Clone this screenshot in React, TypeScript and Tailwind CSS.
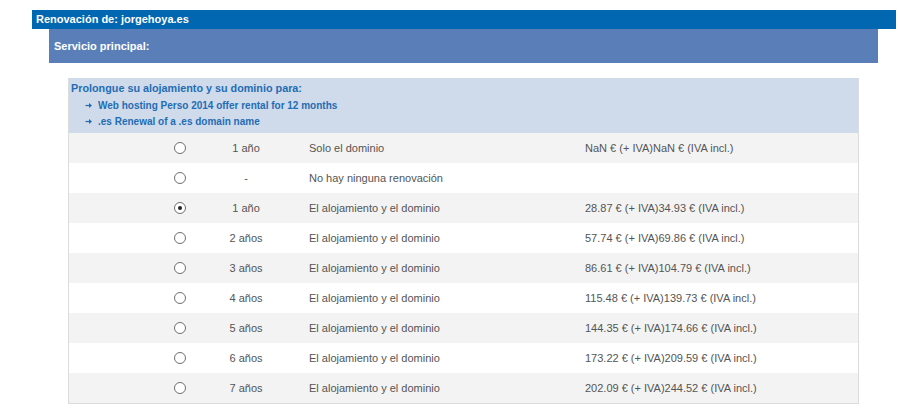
import React from "react";

const rows = [
  { checked: false, years: "1 año", desc: "Solo el dominio", price: "NaN € (+ IVA)NaN € (IVA incl.)" },
  { checked: false, years: "-", desc: "No hay ninguna renovación", price: "" },
  { checked: true, years: "1 año", desc: "El alojamiento y el dominio", price: "28.87 € (+ IVA)34.93 € (IVA incl.)" },
  { checked: false, years: "2 años", desc: "El alojamiento y el dominio", price: "57.74 € (+ IVA)69.86 € (IVA incl.)" },
  { checked: false, years: "3 años", desc: "El alojamiento y el dominio", price: "86.61 € (+ IVA)104.79 € (IVA incl.)" },
  { checked: false, years: "4 años", desc: "El alojamiento y el dominio", price: "115.48 € (+ IVA)139.73 € (IVA incl.)" },
  { checked: false, years: "5 años", desc: "El alojamiento y el dominio", price: "144.35 € (+ IVA)174.66 € (IVA incl.)" },
  { checked: false, years: "6 años", desc: "El alojamiento y el dominio", price: "173.22 € (+ IVA)209.59 € (IVA incl.)" },
  { checked: false, years: "7 años", desc: "El alojamiento y el dominio", price: "202.09 € (+ IVA)244.52 € (IVA incl.)" },
];

function Arrow() {
  return (
    <svg width="8" height="7" viewBox="0 0 8 7" className="shrink-0">
      <path d="M0.5 3.5 H6" stroke="#1f6db5" strokeWidth="1.2" />
      <path d="M4 1 L7 3.5 L4 6 Z" fill="#1f6db5" />
    </svg>
  );
}

function Radio({ checked }: { checked: boolean }) {
  return (
    <div className="w-[12px] h-[12px] rounded-full border border-[#6f6f6f] bg-white flex items-center justify-center">
      {checked && <div className="w-[4px] h-[4px] rounded-full bg-[#222]" />}
    </div>
  );
}

export default function App() {
  return (
    <div
      className="w-[898px] h-[412px] bg-white pt-[10px] pl-[32px] pr-[2px]"
      style={{ fontFamily: '"Liberation Sans", Arial, sans-serif' }}
    >
      <div className="h-[19px] bg-[#0167b1] flex items-center pl-[4px] text-white font-bold text-[11px]">
        Renovación de: jorgehoya.es
      </div>
      <div className="ml-[17px] mr-[18px]">
        <div className="h-[34px] bg-[#5a7fb8] flex items-center pl-[5px] text-white font-bold text-[11px]">
          Servicio principal:
        </div>
        <div className="mx-[19px] mt-[15px] border border-[#dcdcdc] border-t-0">
          <div className="bg-[#cfdaea] h-[55px] pl-[2px] pt-[4px] text-[#1f6db5]">
            <div className="text-[10.8px] font-bold leading-[13px]">Prolongue su alojamiento y su dominio para:</div>
            <div className="pl-[14px] mt-[4px] flex flex-col gap-[3px]">
              <div className="flex items-center gap-[5px] text-[10px] font-bold leading-[13px]">
                <Arrow />
                <span>Web hosting Perso 2014 offer rental for 12 months</span>
              </div>
              <div className="flex items-center gap-[5px] text-[10px] font-bold leading-[13px]">
                <Arrow />
                <span>.es Renewal of a .es domain name</span>
              </div>
            </div>
          </div>
          {rows.map((r, i) => (
            <div
              key={i}
              className={`h-[30px] flex items-center text-[11px] text-[#555] ${i % 2 === 0 ? "bg-[#f3f3f3]" : "bg-white"}`}
            >
              <div className="w-[105px] shrink-0" />
              <Radio checked={r.checked} />
              <div className="w-[120px] shrink-0 text-center">{r.years}</div>
              <div className="w-[279px] shrink-0 pl-[3px]">{r.desc}</div>
              <div>{r.price}</div>
            </div>
          ))}
        </div>
      </div>
    </div>
  );
}
